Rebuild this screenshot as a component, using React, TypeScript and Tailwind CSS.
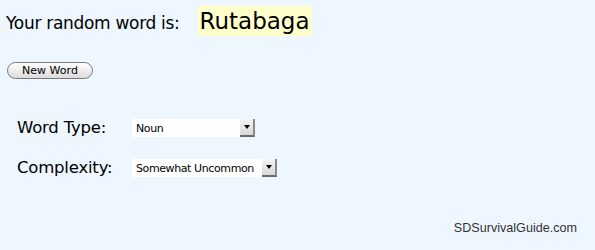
import React from "react";

function FakeSelect({ value, width }: { value: string; width: string }) {
  return (
    <div className={`flex h-[18px] items-stretch bg-white ${width}`}>
      <div className="flex flex-1 items-center whitespace-nowrap pl-[4px] text-[11px] leading-none tracking-[-0.4px] text-black" style={{ fontFamily: '"DejaVu Sans", Verdana, sans-serif' }}>
        {value}
      </div>
      <div className="flex w-[15px] items-center justify-center border-r-2 border-b-2 border-r-[#8a8a8a] border-b-[#6a6a6a] bg-gradient-to-b from-[#f4f4f4] to-[#d8d8d8]">
        <div className="h-0 w-0 border-x-[3.5px] border-t-[4px] border-x-transparent border-t-black" />
      </div>
    </div>
  );
}

export default function App() {
  return (
    <div className="flex min-h-[250px] w-full flex-col bg-[#eef6ff] text-black" style={{ fontFamily: '"DejaVu Sans", Verdana, sans-serif' }}>
      <div className="flex items-center pl-[6px] pt-[6px]">
        <span className="mt-[4px] text-[17px] leading-none tracking-[-0.3px]">Your random word is:</span>
        <span className="ml-[18px] flex h-[30px] items-center bg-[#ffffcc] px-[2px] text-[23px] leading-none">Rutabaga</span>
      </div>
      <div className="pl-[7px] pt-[26px]">
        <button className="flex h-[17px] w-[86px] items-center justify-center rounded-full border border-[#7a7a7a] bg-gradient-to-b from-white to-[#dcdcdc] text-[11px] leading-none text-black">
          New Word
        </button>
      </div>
      <div className="flex flex-col gap-[22px] pl-[17px] pt-[40px]">
        <div className="flex items-center">
          <span className="w-[115px] text-[16.5px] leading-none tracking-[-0.2px]">Word Type:</span>
          <FakeSelect value="Noun" width="w-[123px]" />
        </div>
        <div className="flex items-center">
          <span className="w-[115px] text-[16.5px] leading-none tracking-[-0.2px]">Complexity:</span>
          <FakeSelect value="Somewhat Uncommon" width="w-[145px]" />
        </div>
      </div>
      <div className="mt-auto flex justify-end pb-[12px] pr-[18px]">
        <span className="text-[12.6px] text-[#333]" style={{ fontFamily: '"Liberation Sans", Arial, sans-serif' }}>
          SDSurvivalGuide.com
        </span>
      </div>
    </div>
  );
}
